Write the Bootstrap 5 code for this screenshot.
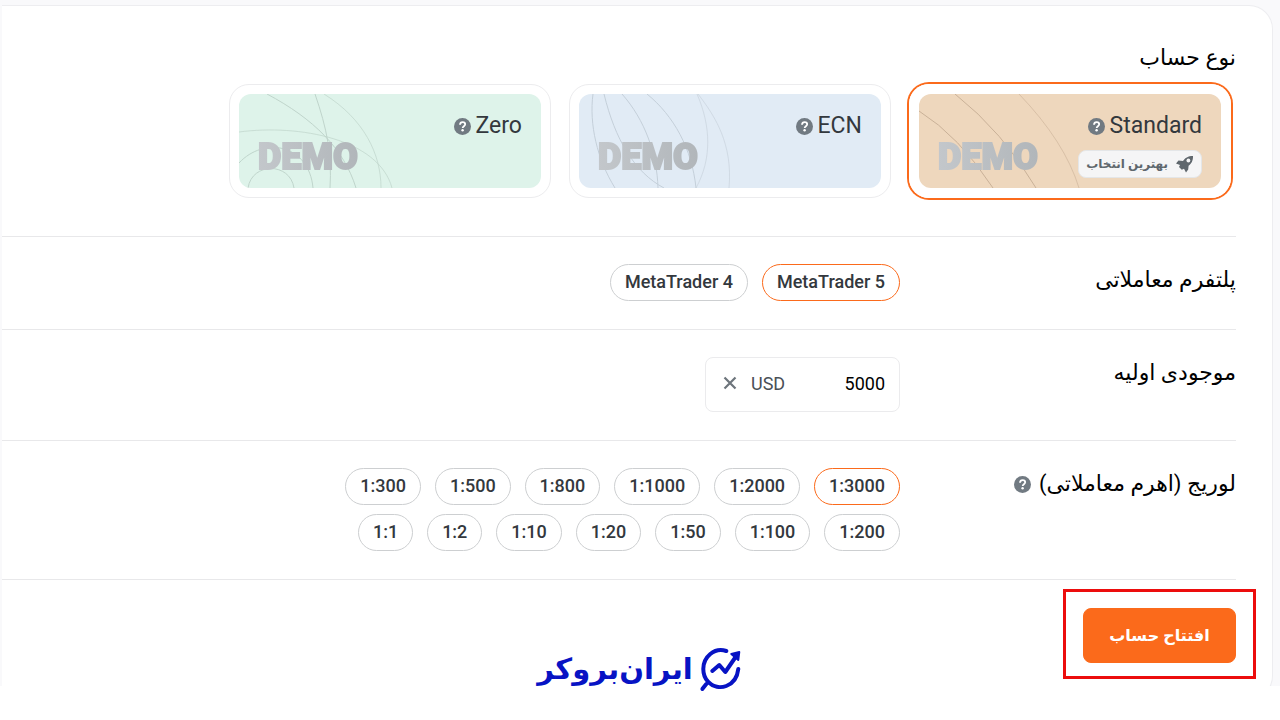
<!DOCTYPE html>
<html lang="fa" dir="rtl">
<head>
<meta charset="utf-8">
<meta name="viewport" content="width=device-width, initial-scale=1">
<title>افتتاح حساب</title>
<link href="https://cdn.jsdelivr.net/npm/bootstrap@5.3.0/dist/css/bootstrap.min.css" rel="stylesheet">
<style>
:root { --accent: #fb6a1b; --line: #e8e8ea; --ink: #33383d; --muted-ink: #70787f; }
body { font-family: Roboto, "DejaVu Sans", sans-serif; background: #fff; color: #000; }
.page-band { background: #f9f9fb; padding: 5px 7px 0 2px; overflow: hidden; }
.account-panel { background: #fff; border: 1px solid #ededf0; border-left: 0; border-radius: 0 24px 24px 0; padding: 0 36px 36px 0; margin-bottom: -14px; }
.form-band { border-bottom: 1px solid var(--line); padding: 27px 0 28px; }
.form-band.types { padding: 36px 0 38px; }
.field-name { font-size: 22px; line-height: 32px; margin: 0; font-weight: 400; }
.field-col { flex: 0 0 336px; }
.tiles { gap: 18px; padding: 10px 5px 0; }
.type-tile { flex: 0 1 322px; border: 1px solid #ececee; border-radius: 20px; padding: 9px; cursor: pointer; }
.btn-check:checked + .type-tile { border-color: #fff; box-shadow: 0 0 0 2px var(--accent); }
.tile-face { position: relative; overflow: hidden; border-radius: 12px; height: 94px; padding: 16px 19px 10px; }
.tile-face.sand { background: #eed7bd; }
.tile-face.sky { background: #e1ebf5; }
.tile-face.mint { background: #def3ea; }
.tile-art { position: absolute; left: 0; top: 0; }
.tile-title { font-size: 23px; line-height: 32px; gap: 5px; color: var(--ink); }
.demo-word { font-size: 36px; line-height: 42px; font-weight: 900; background: linear-gradient(90deg, #c3c7cb, #b1b6ba); -webkit-background-clip: text; background-clip: text; color: transparent; -webkit-text-stroke: 2px transparent; position: relative; }
.best-tag { background: #f5f5f6; border: 1px solid #e4e6e8; border-radius: 8px; height: 28px; margin-top: 8px; padding: 0 7px; gap: 8px; font-size: 12px; font-weight: 700; color: #5f676d; }
.chip-list { gap: 9px 14px; max-width: 600px; }
.chip { border: 1px solid #cdcfd1; border-radius: 19px; height: 37px; padding: 0 14px; font-size: 18px; font-weight: 500; line-height: 33px; color: var(--ink); cursor: pointer; }
.btn-check:checked + .chip { border-color: var(--accent); }
.btn-check:focus-visible + .chip, .btn-check:focus-visible + .type-tile { outline: 2px solid #0d6efd; }
.amount-box { width: 195px; height: 55px; border: 1px solid #ebebed; border-radius: 8px; padding: 0 14px 3px 17px; font-size: 18px; }
.amount-box input { width: 80px; border: 0; padding: 0; background: none; color: #000; text-align: right; }
.amount-unit { color: #495057; margin-left: 14px; }
.submit-wrap { position: relative; margin-top: 28px; }
.submit-wrap::after { content: ""; position: absolute; inset: -19px -20px -16px; border: 3px solid #ec0d0d; pointer-events: none; }
.btn-open { --bs-btn-bg: #fb6a1b; --bs-btn-color: #fff; --bs-btn-border-color: #fb6a1b; --bs-btn-hover-bg: #e85c10; --bs-btn-hover-color: #fff; width: 153px; height: 55px; border-radius: 8px; font-size: 16px; font-weight: 700; padding: 0; }
.site-mark { position: absolute; left: 50%; top: 646px; transform: translateX(-50%); gap: 8px; color: #0713c4; font-size: 29px; font-weight: 700; line-height: 46px; }
</style>
</head>
<body>
<svg class="d-none" aria-hidden="true">
  <symbol id="help" viewBox="0 0 17 17"><circle cx="8.500" cy="8.500" r="8.500" fill="#717a82"/><path d="M6 6.700C6.100 5 7.100 4.100 8.600 4.100c1.600 0 2.600.9 2.600 2.200 0 1.900-2.500 1.900-2.500 3.700" fill="none" stroke="#fff" stroke-width="1.800"/><circle cx="8.600" cy="12.300" r="1.200" fill="#fff"/></symbol>
</svg>
<main class="position-relative min-vh-100">
<div class="page-band">
<form class="account-panel" onsubmit="return false">
  <section class="form-band types">
    <h2 class="field-name">نوع حساب</h2>
    <div class="tiles d-flex">
      <input class="btn-check" type="radio" name="kind" id="k1" checked>
      <label class="type-tile" for="k1">
        <span class="tile-face sand d-flex justify-content-between">
          <svg class="tile-art" width="180" height="94" fill="none" stroke="#c9b198"><path d="M0 17Q40 42 74 94M36 0Q84 38 117 94"/><path d="M100 0Q146 48 160 94" opacity=".6"/></svg>
          <span class="d-flex flex-column align-items-start">
            <span class="tile-title d-flex align-items-center">Standard <svg width="17" height="17" role="img" aria-label="راهنما"><use href="#help"/></svg></span>
            <span class="best-tag d-flex align-items-center">
              <svg width="18" height="18" viewBox="0 0 18 18"><path d="M17 1C12 1 9 3 7 6L2.500 5.500 0 8.500l4 1.400-1 2.100 2.800 2.800 2.200-1 2 3.700 2.200-3.100.4-3.700C15.300 9 17.200 5.500 17 1Z" fill="#5f676d"/><circle cx="12.400" cy="5.500" r="1.900" fill="#f5f5f6"/></svg>
              بهترین انتخاب
            </span>
          </span>
          <span class="demo-word align-self-end">DEMO</span>
        </span>
      </label>
      <input class="btn-check" type="radio" name="kind" id="k2">
      <label class="type-tile" for="k2">
        <span class="tile-face sky d-flex justify-content-between">
          <svg class="tile-art" width="180" height="94" fill="none" stroke="#c4cfd9"><path d="M14 0C10 30 18 65 36 94M25 0C36 45 55 78 85 94M43 0C66 26 78 60 79 94M68 0C95 22 113 55 117 94"/><path d="M118 0C132 32 133 65 117 94M119 0C136 22 154 50 150 94" opacity=".6"/></svg>
          <span class="tile-title d-flex align-items-center align-self-start">ECN <svg width="17" height="17" role="img" aria-label="راهنما"><use href="#help"/></svg></span>
          <span class="demo-word align-self-end">DEMO</span>
        </span>
      </label>
      <input class="btn-check" type="radio" name="kind" id="k3">
      <label class="type-tile" for="k3">
        <span class="tile-face mint d-flex justify-content-between">
          <svg class="tile-art" width="180" height="94" fill="none" stroke="#bfd4cb"><path d="M28 0C75 25 105 55 117 94M76 0C88 35 93 60 91 94M0 69C25 42 70 50 74 94M9 94C13 68 51 68 55 94"/><path d="M85 0C125 25 142 60 142 94M0 38C60 30 140 45 153 94" opacity=".7"/></svg>
          <span class="tile-title d-flex align-items-center align-self-start">Zero <svg width="17" height="17" role="img" aria-label="راهنما"><use href="#help"/></svg></span>
          <span class="demo-word align-self-end">DEMO</span>
        </span>
      </label>
    </div>
  </section>

  <section class="form-band d-flex">
    <div class="field-col"><h2 class="field-name">پلتفرم معاملاتی</h2></div>
    <div class="chip-list d-flex flex-wrap">
      <input class="btn-check" type="radio" name="platform" id="p5" checked><label class="chip" dir="ltr" for="p5">MetaTrader 5</label>
      <input class="btn-check" type="radio" name="platform" id="p4"><label class="chip" dir="ltr" for="p4">MetaTrader 4</label>
    </div>
  </section>

  <section class="form-band d-flex">
    <div class="field-col"><label class="field-name" for="amount">موجودی اولیه</label></div>
    <div class="amount-box d-flex align-items-center">
      <input type="text" id="amount" dir="ltr" value="5000">
      <span class="amount-unit me-auto">USD</span>
      <button type="button" class="btn p-0 border-0 d-flex" aria-label="پاک کردن"><svg width="14" height="14" viewBox="0 0 14 14"><path d="M1.500 1.500l11 11M12.500 1.500l-11 11" stroke="#6d757c" stroke-width="2.200"/></svg></button>
    </div>
  </section>

  <section class="form-band d-flex">
    <div class="field-col d-flex align-items-start gap-2">
      <h2 class="field-name">لوریج (اهرم معاملاتی)</h2>
      <svg class="mt-2" width="17" height="17" role="img" aria-label="راهنما"><use href="#help"/></svg>
    </div>
    <div class="chip-list d-flex flex-wrap">
      <input class="btn-check" type="radio" name="lev" id="l1" checked><label class="chip" dir="ltr" for="l1">1:3000</label>
      <input class="btn-check" type="radio" name="lev" id="l2"><label class="chip" dir="ltr" for="l2">1:2000</label>
      <input class="btn-check" type="radio" name="lev" id="l3"><label class="chip" dir="ltr" for="l3">1:1000</label>
      <input class="btn-check" type="radio" name="lev" id="l4"><label class="chip" dir="ltr" for="l4">1:800</label>
      <input class="btn-check" type="radio" name="lev" id="l5"><label class="chip" dir="ltr" for="l5">1:500</label>
      <input class="btn-check" type="radio" name="lev" id="l6"><label class="chip" dir="ltr" for="l6">1:300</label>
      <input class="btn-check" type="radio" name="lev" id="l7"><label class="chip" dir="ltr" for="l7">1:200</label>
      <input class="btn-check" type="radio" name="lev" id="l8"><label class="chip" dir="ltr" for="l8">1:100</label>
      <input class="btn-check" type="radio" name="lev" id="l9"><label class="chip" dir="ltr" for="l9">1:50</label>
      <input class="btn-check" type="radio" name="lev" id="l10"><label class="chip" dir="ltr" for="l10">1:20</label>
      <input class="btn-check" type="radio" name="lev" id="l11"><label class="chip" dir="ltr" for="l11">1:10</label>
      <input class="btn-check" type="radio" name="lev" id="l12"><label class="chip" dir="ltr" for="l12">1:2</label>
      <input class="btn-check" type="radio" name="lev" id="l13"><label class="chip" dir="ltr" for="l13">1:1</label>
    </div>
  </section>

  <div class="submit-wrap d-inline-block">
    <button type="submit" class="btn btn-open d-block">افتتاح حساب</button>
  </div>
</form>
</div>
<div class="site-mark d-flex align-items-center">
  <svg width="42" height="46" viewBox="0 0 42 46" fill="none" stroke="#0713c4" stroke-width="4" stroke-linecap="round" stroke-linejoin="round"><path d="M26 5C14 1 3 11 3 23c0 6 2 10 5 13M6 38l-4 5M8 36c10 10 28 5 30-13"/><path d="M12 25l7-6 6 7L36 10"/><path d="M31 8l8-2-1 8Z" fill="#0713c4" stroke-width="2"/></svg>
  <span>ایران‌بروکر</span>
</div>
</main>
<script src="https://cdn.jsdelivr.net/npm/bootstrap@5.3.0/dist/js/bootstrap.bundle.min.js"></script>
</body>
</html>
